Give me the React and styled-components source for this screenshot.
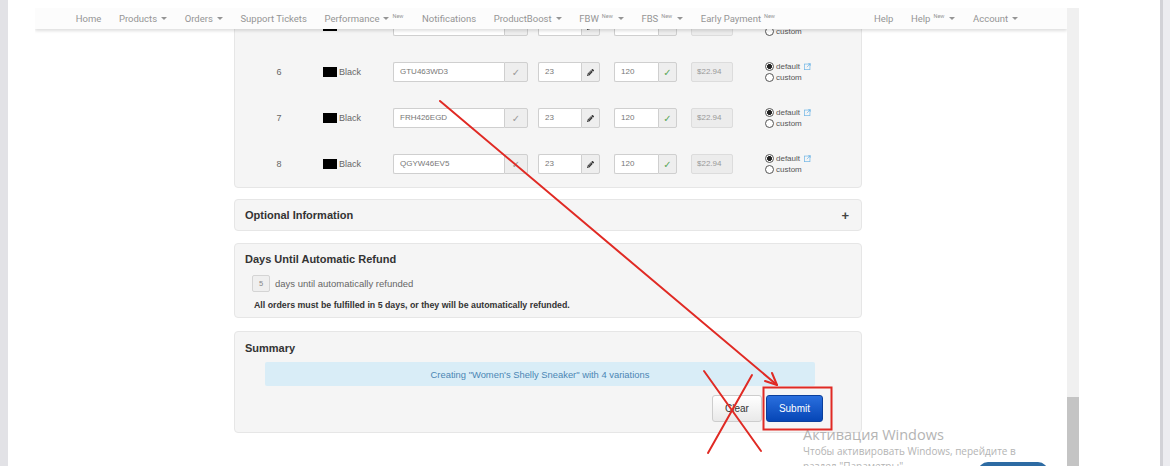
import styled, { createGlobalStyle } from 'styled-components';
import { FaPencilAlt } from 'react-icons/fa';

const GlobalStyle = createGlobalStyle`
    body {
        margin: 0;
        background: #fff;
    }
`;

const navLeft = [
    { label: 'Home' },
    { label: 'Products', caret: true },
    { label: 'Orders', caret: true },
    { label: 'Support Tickets' },
    { label: 'Performance', caret: true, isNew: true, caretFirst: true },
    { label: 'Notifications' },
    { label: 'ProductBoost', caret: true },
    { label: 'FBW', caret: true, isNew: true },
    { label: 'FBS', caret: true, isNew: true },
    { label: 'Early Payment', isNew: true },
];

const navRight = [
    { label: 'Help' },
    { label: 'Help', caret: true, isNew: true },
    { label: 'Account', caret: true },
];

const rows = [
    { n: 5, sku: 'KRT552WD8' },
    { n: 6, sku: 'GTU463WD3' },
    { n: 7, sku: 'FRH426EGD' },
    { n: 8, sku: 'QGYW46EV5' },
];

function NavEntry({ item }) {
    const badge = item.isNew ? <New>New</New> : null;
    const caret = item.caret ? <Caret /> : null;
    return (
        <NavItem>
            {item.label}
            {item.caretFirst ? <>{caret}{badge}</> : <>{badge}{caret}</>}
        </NavItem>
    );
}

function VariantRow({ n, sku }) {
    return (
        <Row>
            <Num>{n}</Num>
            <ColorCell><Swatch />Black</ColorCell>
            <InputGroup $w={135}>
                <Field>{sku}</Field>
                <Addon $w={24}><Tick $c="#9a9a9a">✓</Tick></Addon>
            </InputGroup>
            <InputGroup $w={62}>
                <Field>23</Field>
                <Addon $w={19}><FaPencilAlt size={7} color="#333" /></Addon>
            </InputGroup>
            <InputGroup $w={63}>
                <Field>120</Field>
                <Addon $w={19}><Tick $c="#5aa85a">✓</Tick></Addon>
            </InputGroup>
            <Price>$22.94</Price>
            <Radios>
                <RadioLine><Radio $on />default<LinkIcon viewBox="0 0 10 10">
                    <rect x="0.5" y="1.5" width="8" height="8" fill="none" stroke="#6fb6e6" />
                    <path d="M4 6 L9 1 M6 1 H9 V4" fill="none" stroke="#6fb6e6" />
                </LinkIcon></RadioLine>
                <RadioLine><Radio />custom</RadioLine>
            </Radios>
        </Row>
    );
}

export default function App() {
    return (
        <>
            <GlobalStyle />
            <Screen>
                <LeftEdge />
                <Browser>
                    <Viewport>
                        <Nav>
                            {navLeft.map((item, i) => <NavEntry key={i} item={item} />)}
                            <NavRight>
                                {navRight.map((item, i) => <NavEntry key={i} item={item} />)}
                            </NavRight>
                        </Nav>
                        <Scroller>
                            <Panel $pad="6px 0 0">
                                {rows.map(r => <VariantRow key={r.n} {...r} />)}
                            </Panel>
                            <Panel>
                                <Collapsible>
                                    <Title>Optional Information</Title>
                                    <Plus>+</Plus>
                                </Collapsible>
                            </Panel>
                            <Panel $mt={1} $pad="7px 10px 6px">
                                <Title>Days Until Automatic Refund</Title>
                                <DaysRow>
                                    <DaysBox>5</DaysBox>
                                    days until automatically refunded
                                </DaysRow>
                                <Note>All orders must be fulfilled in 5 days, or they will be automatically refunded.</Note>
                            </Panel>
                            <Panel $mt={2} $pad="8px 10px 10px">
                                <Title>Summary</Title>
                                <Alert>Creating "Women's Shelly Sneaker" with 4 variations</Alert>
                                <Actions>
                                    <Button>Clear</Button>
                                    <Button $primary>Submit</Button>
                                </Actions>
                            </Panel>
                        </Scroller>
                    </Viewport>
                    <Scrollbar><Thumb /></Scrollbar>
                </Browser>
                <RightEdge />

                <Watermark>
                    <WmTitle>Активация Windows</WmTitle>
                    <WmText>Чтобы активировать Windows, перейдите в</WmText>
                    <WmText>раздел "Параметры".</WmText>
                </Watermark>
                <Pill />

                <Marks width="1170" height="466" viewBox="0 0 1170 466">
                    <g stroke="#e02a24" strokeWidth="2" fill="none" strokeLinecap="round">
                        <path d="M440 101 L777 385" />
                        <path d="M777 385 L765 381 M777 385 L772 373" />
                        <path d="M704 371 L761 451" />
                        <path d="M752 375 L708 453" />
                        <rect x="763.5" y="387.5" width="68" height="42" />
                    </g>
                </Marks>
            </Screen>
        </>
    );
}

const Screen = styled.div`
    position: relative;
    display: flex;
    width: 1170px;
    height: 466px;
    overflow: hidden;
    background: #fff;
    font-family: 'Liberation Sans', Arial, sans-serif;
`;

const LeftEdge = styled.div`
    width: 8px;
    background: #e2e2e6;
`;

const RightEdge = styled.div`
    width: 10px;
    margin-left: auto;
    background: linear-gradient(to right, #d2d2d7 0 3px, #ececf0 3px);
`;

const Browser = styled.div`
    display: flex;
    width: 1044px;
    margin: 8px 0 0 27px;
    height: 458px;
`;

const Viewport = styled.div`
    position: relative;
    width: 1032px;
    overflow: hidden;
`;

const Scrollbar = styled.div`
    width: 12px;
    background: #f0f0f0;
    display: flex;
    flex-direction: column;
    justify-content: flex-end;
`;

const Thumb = styled.div`
    height: 69px;
    background: #c4c4c4;
`;

const Nav = styled.div`
    position: absolute;
    top: 0;
    left: 0;
    right: 0;
    z-index: 2;
    height: 21px;
    display: flex;
    align-items: center;
    padding: 0 40px 0 32px;
    background: #fcfcfc;
    box-shadow: 0 2px 3px rgba(0, 0, 0, 0.13);
    font-family: Roboto, 'Liberation Sans', sans-serif;
    font-size: 9.5px;
    color: #959595;
`;

const NavRight = styled.div`
    display: flex;
    margin-left: auto;
`;

const NavItem = styled.div`
    display: flex;
    align-items: center;
    padding: 0 8.8px;
    white-space: nowrap;
`;

const New = styled.span`
    font-size: 5.5px;
    line-height: 6px;
    align-self: flex-start;
    margin: 0 1px 0 3px;
`;

const Caret = styled.span`
    width: 0;
    height: 0;
    margin-left: 4px;
    border-top: 3px solid #959595;
    border-left: 3px solid transparent;
    border-right: 3px solid transparent;
`;

const Scroller = styled.div`
    display: flex;
    flex-direction: column;
    gap: 11px;
    width: 628px;
    margin: -12px 0 0 199px;
`;

const Panel = styled.div`
    background: #f5f5f5;
    border: 1px solid #e6e6e6;
    border-radius: 4px;
    margin-top: ${p => p.$mt || 0}px;
    padding: ${p => p.$pad || '0'};
    color: #333;
`;

const Row = styled.div`
    display: grid;
    grid-template-columns: 88px 70px 145px 76px 77px 74px 1fr;
    align-items: center;
    height: 46px;
`;

const Num = styled.div`
    text-align: center;
    font-size: 9px;
    color: #666;
`;

const ColorCell = styled.div`
    display: flex;
    align-items: center;
    font-size: 9px;
    color: #666;
`;

const Swatch = styled.span`
    width: 14px;
    height: 10px;
    background: #000;
    margin-right: 2px;
`;

const InputGroup = styled.div`
    display: flex;
    width: ${p => p.$w}px;
    height: 20px;
`;

const Field = styled.div`
    flex: 1;
    box-sizing: border-box;
    border: 1px solid #cfcfcf;
    border-right: none;
    border-radius: 2px 0 0 2px;
    background: #fff;
    padding-left: 6px;
    font-size: 8px;
    line-height: 18px;
    color: #777;
`;

const Addon = styled.div`
    width: ${p => p.$w}px;
    box-sizing: border-box;
    display: flex;
    align-items: center;
    justify-content: center;
    border: 1px solid #cfcfcf;
    border-radius: 0 2px 2px 0;
    background: #eeeeee;
`;

const Tick = styled.span`
    font-family: 'DejaVu Sans', sans-serif;
    font-size: 10px;
    color: ${p => p.$c};
`;

const Price = styled.div`
    width: 42px;
    height: 20px;
    box-sizing: border-box;
    border: 1px solid #dcdcdc;
    border-radius: 2px;
    background: #ececec;
    padding-left: 5px;
    font-size: 8px;
    line-height: 18px;
    color: #999;
`;

const Radios = styled.div`
    display: flex;
    flex-direction: column;
    gap: 1px;
    font-size: 8px;
    color: #555;
`;

const RadioLine = styled.div`
    display: flex;
    align-items: center;
    gap: 2px;
    height: 10px;
`;

const Radio = styled.span`
    width: 9px;
    height: 9px;
    box-sizing: border-box;
    border-radius: 50%;
    border: 1px solid #555;
    background: ${p => p.$on ? 'radial-gradient(circle, #222 0 2.2px, #fff 2.6px)' : '#fff'};
`;

const LinkIcon = styled.svg`
    width: 7px;
    height: 7px;
    margin-left: 2px;
`;

const Collapsible = styled.div`
    height: 30px;
    display: flex;
    align-items: center;
    justify-content: space-between;
    padding: 0 12px 0 10px;
`;

const Title = styled.div`
    font-size: 11px;
    font-weight: bold;
    line-height: 16px;
    color: #333;
`;

const Plus = styled.span`
    font-size: 13px;
    font-weight: bold;
    color: #444;
`;

const DaysRow = styled.div`
    display: flex;
    align-items: center;
    gap: 5px;
    margin: 8px 0 0 7px;
    font-size: 9.5px;
    color: #666;
`;

const DaysBox = styled.span`
    width: 18px;
    height: 17px;
    box-sizing: border-box;
    display: flex;
    align-items: center;
    justify-content: center;
    border: 1px solid #d4d4d4;
    border-radius: 2px;
    background: #efefef;
    font-size: 7.5px;
    color: #888;
`;

const Note = styled.div`
    margin: 7px 0 0 9px;
    font-size: 8.8px;
    line-height: 12px;
    font-weight: bold;
    color: #333;
`;

const Alert = styled.div`
    margin: 6px 36px 0 20px;
    height: 24px;
    display: flex;
    align-items: center;
    justify-content: center;
    background: #d9edf7;
    border-radius: 2px;
    font-size: 9.4px;
    color: #4b86b4;
`;

const Actions = styled.div`
    display: flex;
    justify-content: flex-end;
    gap: 4px;
    margin: 9px 28px 0 0;
`;

const Button = styled.div`
    height: 27px;
    box-sizing: border-box;
    padding: 0 12px;
    display: flex;
    align-items: center;
    border-radius: 3px;
    font-size: 10px;
    color: ${p => p.$primary ? '#fff' : '#333'};
    border: 1px solid ${p => p.$primary ? '#0a3f9c' : '#cdcdcd'};
    background: ${p => p.$primary
        ? 'linear-gradient(#2a6fde, #0646b6)'
        : 'linear-gradient(#ffffff, #e9e9e9)'};
`;

const Watermark = styled.div`
    position: absolute;
    left: 803px;
    top: 425px;
    font-family: 'Open Sans', 'Noto Sans', sans-serif;
    color: #b4b4b4;
`;

const WmTitle = styled.div`
    font-size: 14.5px;
    line-height: 19px;
`;

const WmText = styled.div`
    font-size: 10px;
    line-height: 15px;
`;

const Pill = styled.div`
    position: absolute;
    left: 978px;
    top: 462px;
    width: 70px;
    height: 20px;
    border-radius: 10px;
    background: #2d6ba3;
`;

const Marks = styled.svg`
    position: absolute;
    left: 0;
    top: 0;
    pointer-events: none;
`;
